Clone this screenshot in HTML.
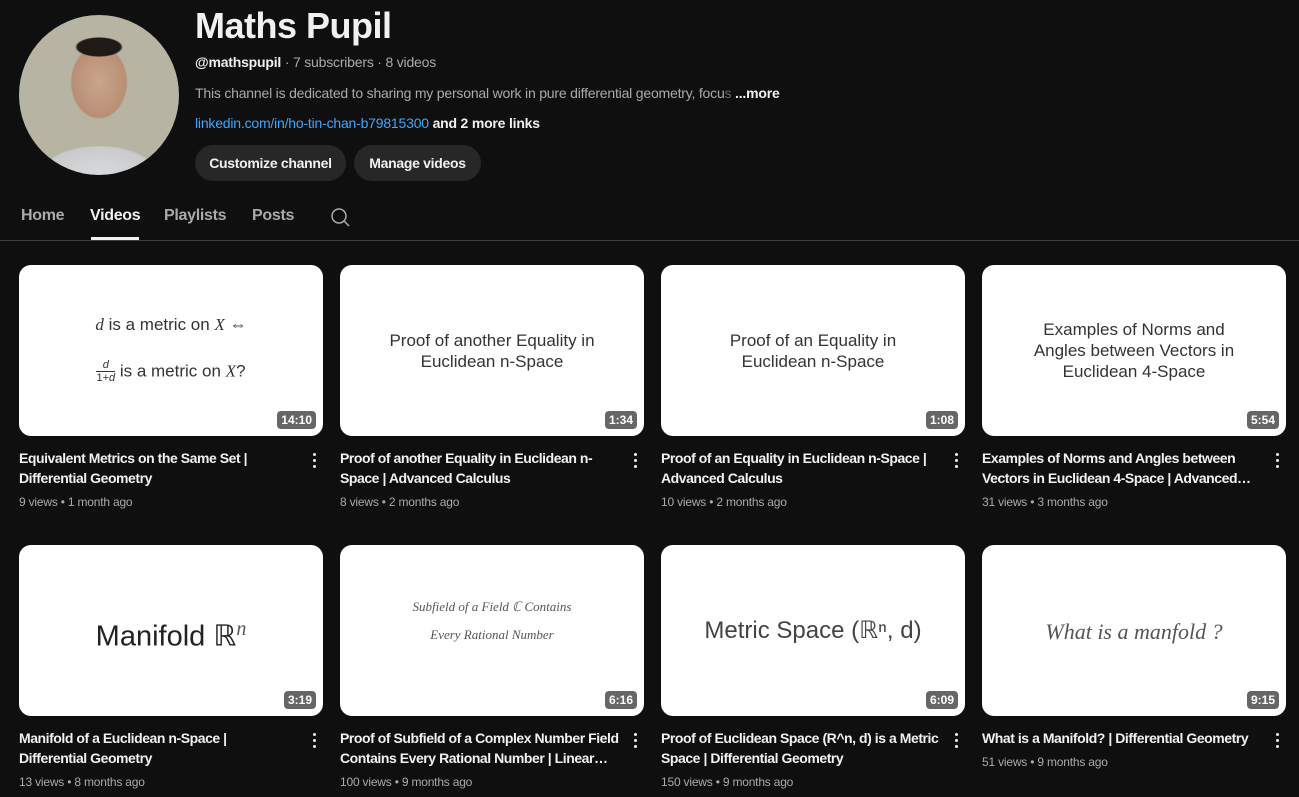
<!DOCTYPE html>
<html><head><meta charset="utf-8"><style>
*{margin:0;padding:0;box-sizing:border-box}
body{width:1299px;height:797px;background:#0f0f0f;color:#f1f1f1;font-family:"Liberation Sans",sans-serif;position:relative;overflow:hidden}
.abs{position:absolute}
.av{left:19px;top:15px;width:160px;height:160px;border-radius:50%;background:radial-gradient(ellipse 24px 10px at 50% 20%,#1d1a18 0,#1d1a18 90%,transparent 100%),radial-gradient(ellipse 34px 44px at 50% 42%,#c9a58a 0,#b98f74 80%,transparent 84%),radial-gradient(ellipse 70px 35px at 50% 100%,#d8dadc 0,#c8cacc 80%,transparent 84%),#b8b4a4;overflow:hidden}
h1{left:195px;top:5px;font-size:36px;font-weight:bold;letter-spacing:-0.5px}
.sub{left:195px;top:54px;font-size:14px;color:#aaa;letter-spacing:-0.2px}
.sub b{color:#f1f1f1}
.desc{left:195px;top:85px;font-size:14px;color:#aaa;letter-spacing:-0.2px}
.links{left:195px;top:115px;font-size:14px;font-weight:bold;letter-spacing:-0.2px}
.links span{color:#3ea6ff;font-weight:normal}
.btn{top:145px;height:36px;border-radius:18px;background:#272727;font-size:14px;font-weight:bold;line-height:36px;text-align:center;letter-spacing:-0.3px}
.tab{top:207px;font-size:16px;font-weight:bold;color:#aaa;letter-spacing:-0.3px}
.line{left:0;top:240px;width:1299px;height:1px;background:#3f3f3f}
.card{width:304px}
.th{width:304px;height:171px;background:#fff;border-radius:12px;position:relative;color:#333;text-align:center}
.dur{position:absolute;right:7px;bottom:7px;background:rgba(0,0,0,.6);color:#fff;font-size:12px;font-weight:bold;padding:2px 4px;border-radius:4px}
.t{margin-top:12px;font-size:14px;font-weight:bold;line-height:20px;width:290px;max-height:40px;overflow:hidden;letter-spacing:-0.45px;white-space:nowrap}
.m{font-size:12px;color:#aaa;margin-top:7px;letter-spacing:-0.2px}
.dots{position:absolute;right:6px;top:188px;width:4px}
.dots i{display:block;width:3px;height:3px;background:#f1f1f1;border-radius:50%;margin-bottom:3px}
.tt{position:absolute;left:0;right:0;font-size:17px;line-height:21px;color:#333}
.hw{font-family:"Liberation Serif",serif;font-style:italic;color:#555}
</style></head><body>
<div class="abs av"></div>
<h1 class="abs">Maths Pupil</h1>
<div class="abs sub"><b>@mathspupil</b> · 7 subscribers · 8 videos</div>
<div class="abs desc">This channel is dedicated to sharing my personal work in pure differential geometry, focu<span style="color:#666">s</span> <b style="color:#f1f1f1">...more</b></div>
<div class="abs links"><span>linkedin.com/in/ho-tin-chan-b79815300</span> and 2 more links</div>
<div class="abs btn" style="left:195px;width:151px">Customize channel</div>
<div class="abs btn" style="left:354px;width:127px">Manage videos</div>
<div class="abs tab" style="left:21px">Home</div>
<div class="abs tab" style="left:90px;color:#f1f1f1">Videos</div>
<div class="abs" style="left:91px;top:237px;width:48px;height:3px;background:#f1f1f1"></div>
<div class="abs tab" style="left:164px">Playlists</div>
<div class="abs tab" style="left:252px">Posts</div>
<svg class="abs" style="left:329px;top:206px" width="22" height="22" viewBox="0 0 22 22"><circle cx="10" cy="10" r="7" fill="none" stroke="#aaa" stroke-width="1.5"/><path d="M15 15l5 5" stroke="#aaa" stroke-width="1.5"/></svg>
<div class="line abs"></div>

<div class="abs card" style="left:19px;top:265px"><div class="th"><div class="tt" style="top:49px;font-size:17px"><i class="hw" style="color:#333">d</i> is a metric on <i class="hw" style="color:#333">X</i> ⇔</div><div class="tt" style="top:94px"><span style="display:inline-block;font-size:11px;line-height:13px;vertical-align:middle"><i>d</i><br><span style="border-top:1px solid #333">1+<i>d</i></span></span> is a metric on <i class="hw" style="color:#333">X</i>?</div><div class="dur">14:10</div></div><div class="t">Equivalent Metrics on the Same Set |<br>Differential Geometry</div><div class="m">9 views • 1 month ago</div><div class="dots"><i></i><i></i><i></i></div></div>

<div class="abs card" style="left:340px;top:265px"><div class="th"><div class="tt" style="top:65px">Proof of another Equality in<br>Euclidean n-Space</div><div class="dur">1:34</div></div><div class="t">Proof of another Equality in Euclidean n-<br>Space | Advanced Calculus</div><div class="m">8 views • 2 months ago</div><div class="dots"><i></i><i></i><i></i></div></div>

<div class="abs card" style="left:661px;top:265px"><div class="th"><div class="tt" style="top:65px">Proof of an Equality in<br>Euclidean n-Space</div><div class="dur">1:08</div></div><div class="t">Proof of an Equality in Euclidean n-Space |<br>Advanced Calculus</div><div class="m">10 views • 2 months ago</div><div class="dots"><i></i><i></i><i></i></div></div>

<div class="abs card" style="left:982px;top:265px"><div class="th"><div class="tt" style="top:54px">Examples of Norms and<br>Angles between Vectors in<br>Euclidean 4-Space</div><div class="dur">5:54</div></div><div class="t">Examples of Norms and Angles between<br>Vectors in Euclidean 4-Space | Advanced…</div><div class="m">31 views • 3 months ago</div><div class="dots"><i></i><i></i><i></i></div></div>

<div class="abs card" style="left:19px;top:545px"><div class="th"><div class="tt" style="top:67px;font-size:29px;line-height:34px;color:#222">Manifold ℝ<sup style="font-size:20px" class="hw">n</sup></div><div class="dur">3:19</div></div><div class="t">Manifold of a Euclidean n-Space |<br>Differential Geometry</div><div class="m">13 views • 8 months ago</div><div class="dots"><i></i><i></i><i></i></div></div>

<div class="abs card" style="left:340px;top:545px"><div class="th"><div class="tt hw" style="top:48px;font-size:13px;line-height:28px">Subfield of a Field ℂ Contains<br>Every Rational Number</div><div class="dur">6:16</div></div><div class="t">Proof of Subfield of a Complex Number Field<br>Contains Every Rational Number | Linear…</div><div class="m">100 views • 9 months ago</div><div class="dots"><i></i><i></i><i></i></div></div>

<div class="abs card" style="left:661px;top:545px"><div class="th"><div class="tt" style="top:72px;font-size:24px;line-height:28px;color:#444">Metric Space (ℝⁿ, d)</div><div class="dur">6:09</div></div><div class="t">Proof of Euclidean Space (R^n, d) is a Metric<br>Space | Differential Geometry</div><div class="m">150 views • 9 months ago</div><div class="dots"><i></i><i></i><i></i></div></div>

<div class="abs card" style="left:982px;top:545px"><div class="th"><div class="tt hw" style="top:74px;font-size:22px;line-height:26px">What is a manfold ?</div><div class="dur">9:15</div></div><div class="t" style="max-height:20px">What is a Manifold? | Differential Geometry</div><div class="m">51 views • 9 months ago</div><div class="dots"><i></i><i></i><i></i></div></div>
</body></html>
